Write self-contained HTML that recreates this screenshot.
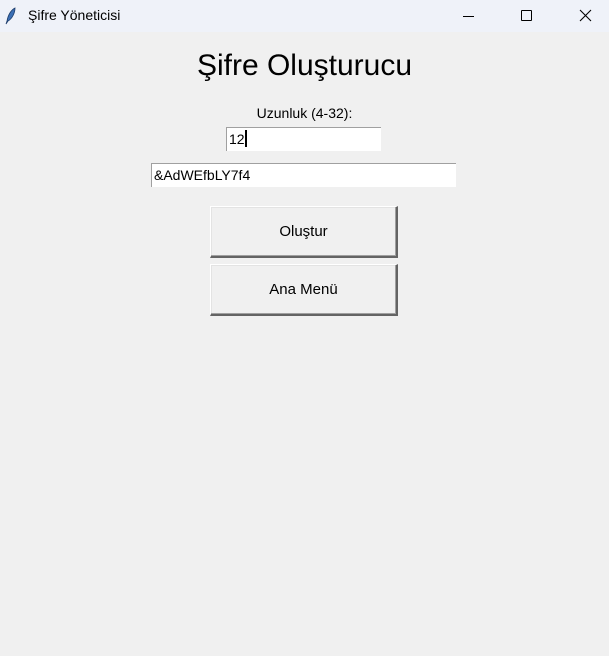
<!DOCTYPE html>
<html><head><meta charset="utf-8"><style>
body{margin:0;width:609px;height:656px;background:#f0f0f0;font-family:"Liberation Sans",sans-serif;position:relative;overflow:hidden}
.tb{position:absolute;left:0;top:0;width:609px;height:32px;background:#eff2f9}
.abs{position:absolute}
.entry{position:absolute;background:#fff;border-top:1px solid #a0a0a0;border-left:1px solid #a0a0a0;box-sizing:border-box;font-size:14px;color:#000;padding-left:2px;line-height:22px}
.btn{position:absolute;box-sizing:border-box;background:#f0f0f0;border-top:1px solid #fff;border-left:1px solid #fff;border-right:2px solid #646464;border-bottom:2px solid #646464;box-shadow:inset -1px -1px 0 #a0a0a0,inset 1px 1px 0 #e3e3e3;font-size:15px;text-align:center;color:#000}
</style></head><body>
<div class="tb">
<svg class="abs" style="left:5px;top:7px" width="12" height="18" viewBox="0 0 12 18"><path d="M10 1 C6 3 3 8 2 14 L1 17 L3 14 C7 12 10 6 10 1Z" fill="#3b6fb5" stroke="#1d3d6b" stroke-width="0.8"/></svg>
<div class="abs" style="left:28px;top:7px;font-size:14px;color:#000">Şifre Yöneticisi</div>
<div class="abs" style="left:463px;top:16px;width:11px;height:1px;background:#000"></div>
<div class="abs" style="left:521px;top:10px;width:9px;height:9px;border:1px solid #000;border-radius:1px"></div>
<svg class="abs" style="left:579px;top:9px" width="13" height="13"><path d="M1 1L12 12M12 1L1 12" stroke="#000" stroke-width="1.1"/></svg>
</div>
<div class="abs" style="width:609px;top:49px;text-align:center;font-size:30px;color:#000;left:0">Şifre Oluşturucu</div>
<div class="abs" style="width:609px;top:105px;text-align:center;font-size:14px;left:0">Uzunluk (4-32):</div>
<div class="entry" style="left:226px;top:127px;width:155px;height:24px">12<span style="display:inline-block;width:2px;height:17px;background:#000;vertical-align:-3px"></span></div>
<div class="entry" style="left:151px;top:163px;width:305px;height:24px">&amp;AdWEfbLY7f4</div>
<div class="btn" style="left:210px;top:206px;width:188px;height:52px;line-height:50px">Oluştur</div>
<div class="btn" style="left:210px;top:264px;width:188px;height:52px;line-height:50px">Ana Menü</div>
</body></html>
